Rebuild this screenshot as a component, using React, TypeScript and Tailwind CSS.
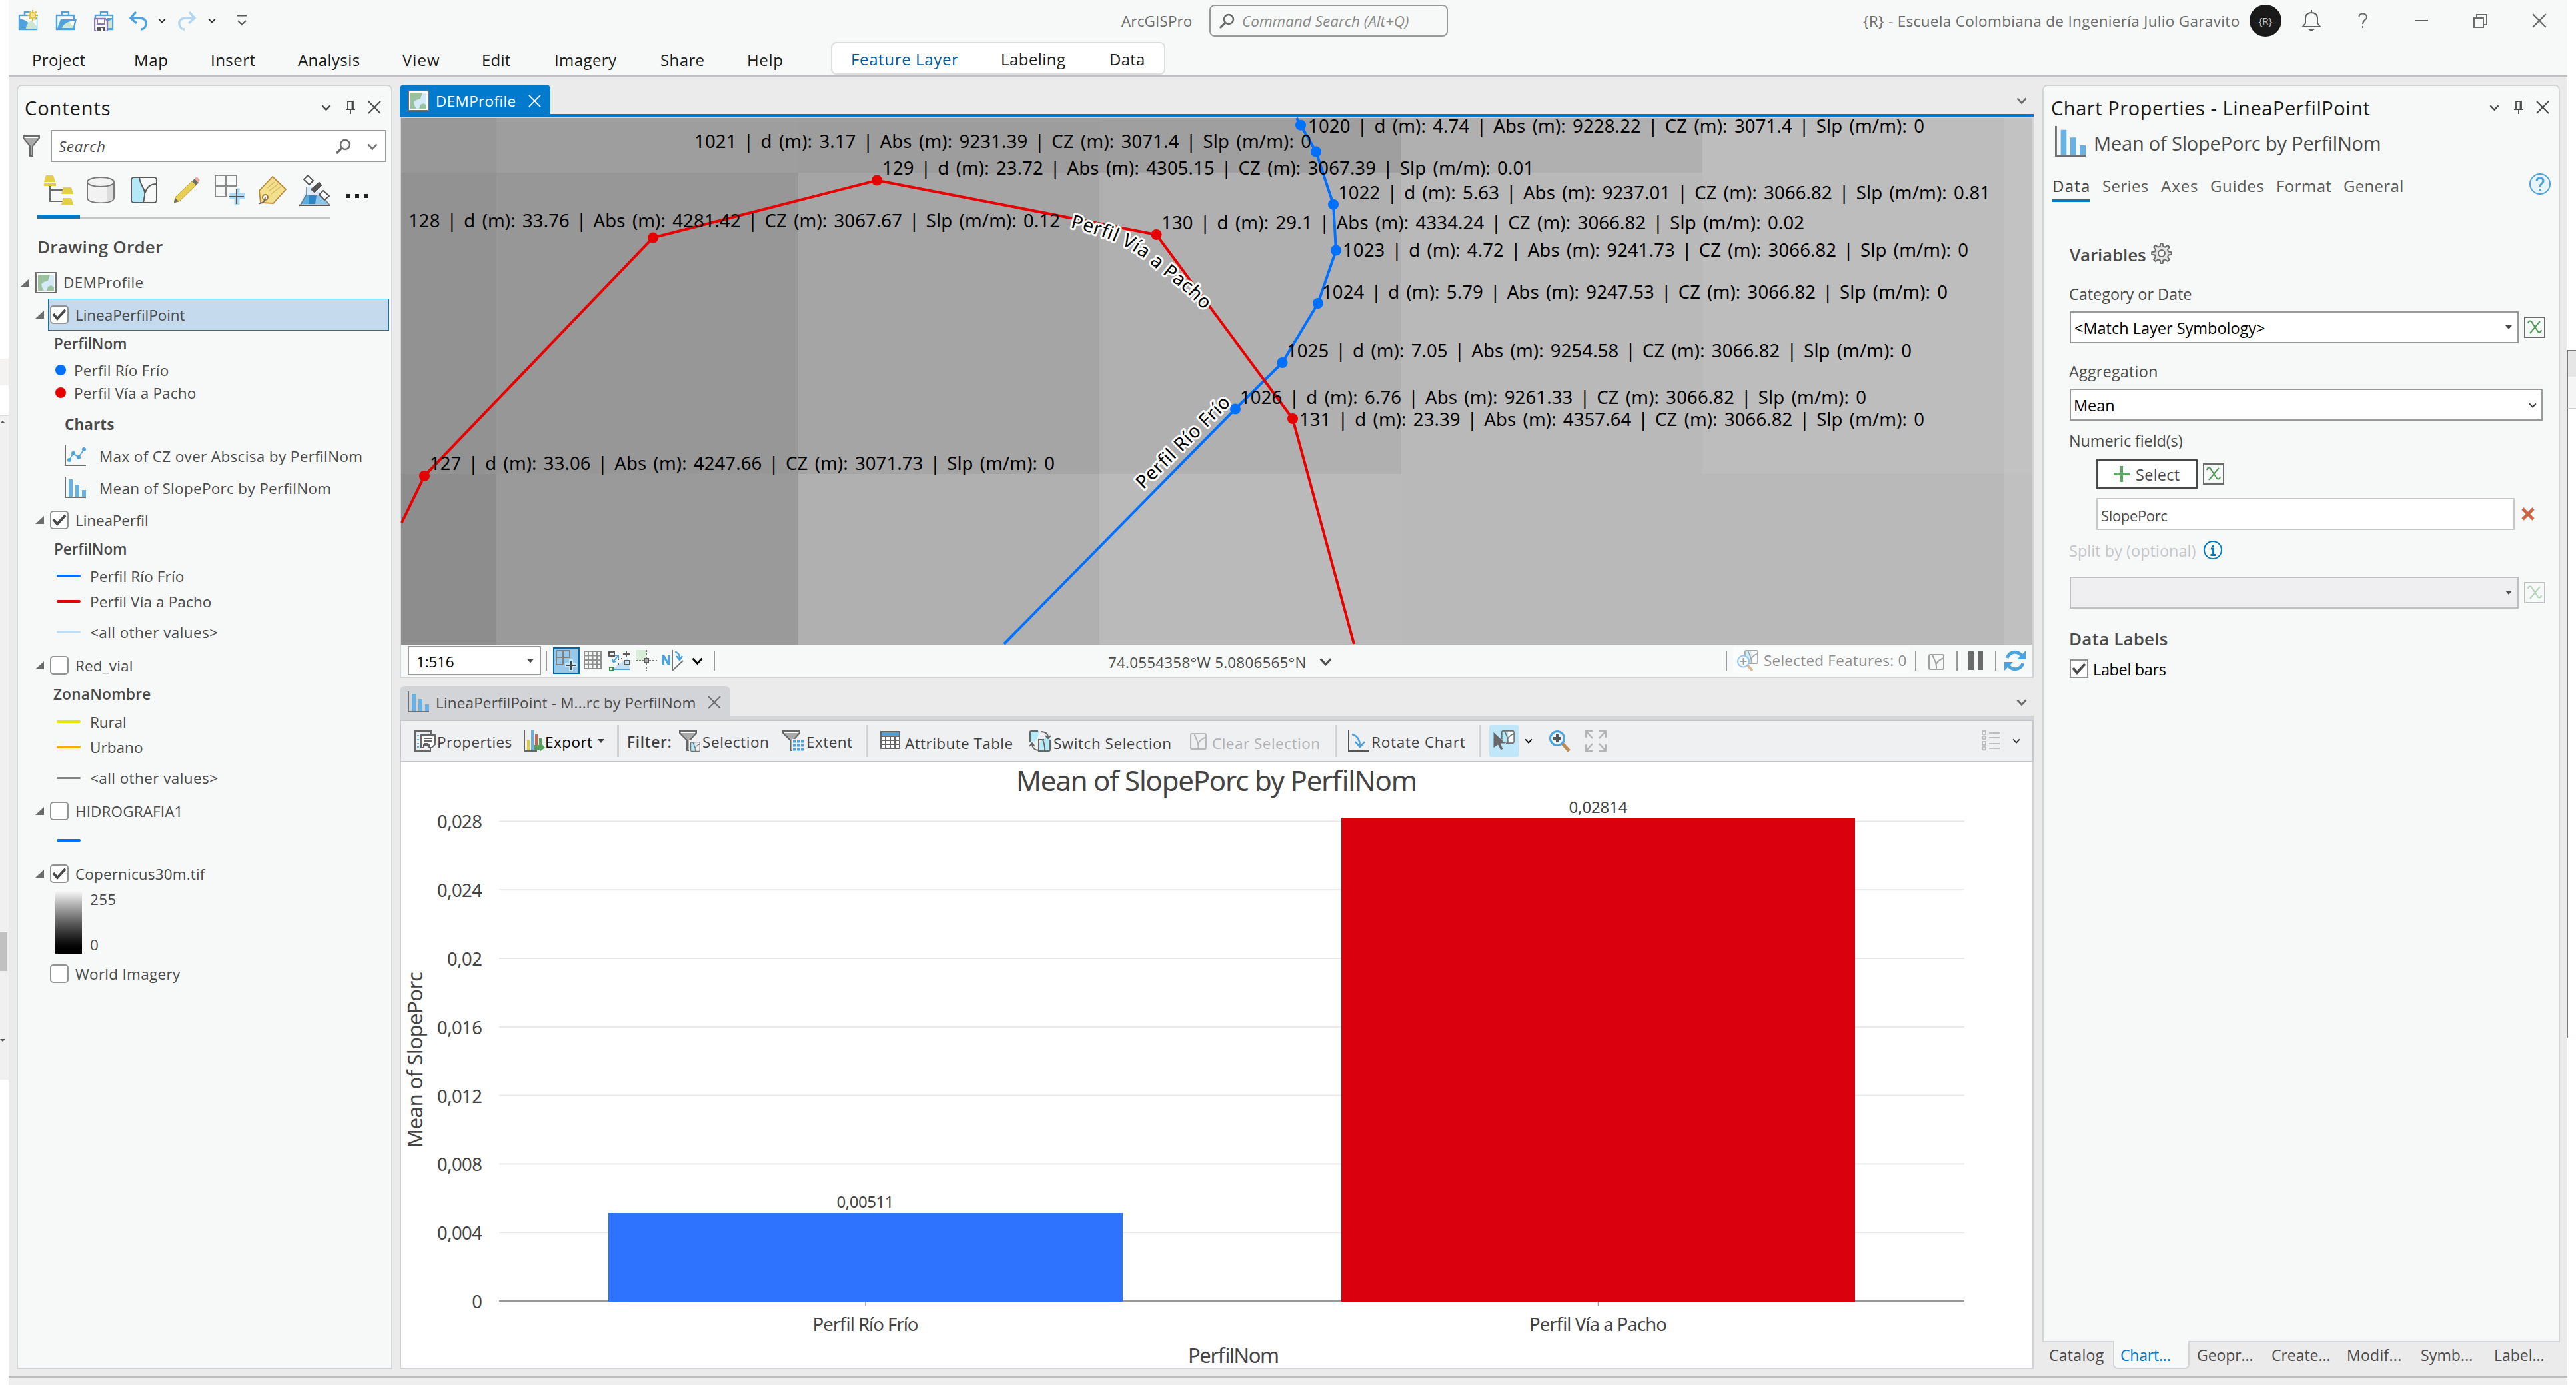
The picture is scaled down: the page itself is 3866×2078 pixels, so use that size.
import React, { useLayoutEffect, useRef } from "react";

/** Single-line text whose tracking adapts so that it fills its box exactly. */
function T({ c, children }: { c: string; children: string }) {
  const ref = useRef<HTMLSpanElement>(null);
  useLayoutEffect(() => {
    const el = ref.current;
    if (!el || !el.parentElement) return;
    el.style.letterSpacing = "0px";
    const natural = el.getBoundingClientRect().width;
    const target = el.parentElement.getBoundingClientRect().width + 2.5;
    el.style.letterSpacing = (target - natural) / children.length + "px";
  }, [children]);
  return (
    <span className={"block shrink-0 leading-none whitespace-pre " + c}>
      <span ref={ref} className="-ml-[1px] inline-block">{children}</span>
    </span>
  );
}

type P = { c?: string };

const Chevron = ({ c = "" }: P) => (
  <svg className={"shrink-0 " + c} viewBox="0 0 16 16" preserveAspectRatio="xMidYMid meet" fill="none" stroke="currentColor" strokeWidth="2.6">
    <path d="M1.5 4.5 8 11.5 14.5 4.5" />
  </svg>
);
const Cross = ({ c = "" }: P) => (
  <svg className={"shrink-0 " + c} viewBox="0 0 20 20" fill="none" stroke="currentColor" strokeWidth="2">
    <path d="M1 1 19 19M19 1 1 19" />
  </svg>
);
const Pin = ({ c = "" }: P) => (
  <svg className={"shrink-0 " + c} viewBox="0 0 14 20" fill="none" stroke="#4a4a4a" strokeWidth="1.8">
    <path d="M3 1H11V13M3 1V13M9.5 1V13M0 13.2H14M7 13V20" />
  </svg>
);
const Triangle = ({ c = "" }: P) => (
  <svg className={"shrink-0 " + c} viewBox="0 0 10 6" fill="currentColor"><path d="M0 0H10L5 6Z" /></svg>
);
const Loupe = ({ c = "" }: P) => (
  <svg className={"shrink-0 " + c} viewBox="0 0 23 23" fill="none" stroke="#6a6a6a" strokeWidth="2.6">
    <circle cx="14" cy="9" r="7" /><path d="M9 14 1 22" strokeWidth="3.2" />
  </svg>
);
const MapIcon = ({ c = "" }: P) => (
  <svg className={"shrink-0 " + c} viewBox="0 0 32 32">
    <rect x="1" y="1" width="30" height="30" fill="#fff" stroke="#6f6f6f" strokeWidth="2" />
    <rect x="4" y="4" width="24" height="24" fill="#d3e9f8" />
    <path d="M4 4H22L19 13 13 15 9 18 10 23 13 28H4ZM17 28 19 22 24 20 28 23V28Z" fill="#9bc29d" />
  </svg>
);
const BarIcon = ({ c = "" }: P) => (
  <svg className={"shrink-0 " + c} viewBox="0 0 32 32">
    <path d="M1 0V31H32" fill="none" stroke="#6f6f6f" strokeWidth="2" />
    <path d="M6 4H12V30H6ZM16 12H22V30H16ZM26 20H32V30H26Z" fill="#67b2e2" />
  </svg>
);
const LineIcon = ({ c = "" }: P) => (
  <svg className={"shrink-0 " + c} viewBox="0 0 32 32">
    <path d="M1 0V31H32" fill="none" stroke="#6f6f6f" strokeWidth="2" />
    <path d="M7 23 13 13 21 19 29 7" fill="none" stroke="#4fa3dc" strokeWidth="1.6" />
    <g fill="#4fa3dc"><circle cx="7" cy="23" r="3" /><circle cx="13" cy="13" r="3" /><circle cx="21" cy="19" r="3" /><circle cx="29" cy="7" r="3" /></g>
  </svg>
);
const XField = ({ c = "" }: P) => (
  <svg className={"h-8 w-8 shrink-0 " + c} viewBox="0 0 32 32" fill="none">
    <rect x="1" y="1" width="30" height="30" stroke="#6b6b6b" strokeWidth="2" fill="#f7f9f8" />
    <path d="M6 10C7 5 11 6 12 9L20 21C21 24 25 25 26 20M24 7 9 25" stroke="#4f9a57" strokeWidth="2" />
  </svg>
);
const Check = ({ on, c = "" }: { on?: boolean; c?: string }) => (
  <span className={"flex h-7 w-7 shrink-0 items-center justify-center rounded-[5px] border-2 border-[#939393] bg-white " + c}>
    {on && (
      <svg className="h-6 w-6" viewBox="0 0 24 24" fill="none" stroke="#4a4a4a" strokeWidth="4"><path d="M3 11 9 18 21 5" /></svg>
    )}
  </span>
);
const Expander = ({ c = "" }: P) => (
  <svg className={"h-3 w-[13px] shrink-0 " + c} viewBox="0 0 13 12"><path d="M13 0V12H0Z" fill="#6b6b6b" /></svg>
);
/* Small "selected polygon" tile reused by several tools. */
const Tile = ({ fill = "#b4e9f8", stroke = "#6f6f6f" }: { fill?: string; stroke?: string }) => (
  <g stroke={stroke} strokeWidth="2" fill="none">
    <path d="M1 1H12L13 14 8 23H1Z" fill={fill} stroke="none" />
    <rect x="1" y="1" width="22" height="22" rx="2" />
    <path d="M6 1C8 8 13 12 12 23M23 6C18 8 14 10 12 15" />
  </g>
);
const Funnel = ({ c = "" }: P) => (
  <svg className={"shrink-0 " + c} viewBox="0 0 26 32">
    <path d="M1 1H25V4L15 16V31H11V16L1 4Z" fill="#ababab" stroke="#6b6b6b" strokeWidth="2" />
    <path d="M3 2.5H23V4H3Z" fill="#fff" />
  </svg>
);
const Sep = ({ c }: { c: string }) => <span className={"shrink-0 " + c} />;

/* ---------- Title bar ---------- */

const Bag = ({ open }: { open?: boolean }) => (
  <>
    <path d="M10 8V3H20V8" fill="none" stroke="#4fa3dc" strokeWidth="2.4" />
    <rect x="2" y="8" width="26" height="21" fill={open ? "#f7f9f8" : "#fff"} stroke="#4fa3dc" strokeWidth="2.4" />
  </>
);

function TitleBar() {
  return (
    <div className="flex h-[62px] items-center text-[22.5px] text-[#6b6b6b]">
      <svg className="ml-[14px] h-8 w-8 shrink-0" viewBox="0 0 32 32">
        <Bag />
        <path d="M1 13C10 14 15 17 18 23L28 13V30H1Z" fill="#4fa3dc" />
        <path d="M12 28C12 20 20 14 28 13V28Z" fill="#cfe6d2" /><path d="M21 16 28 24V15Z" fill="#fff" />
        <circle cx="22" cy="8" r="6.5" fill="#fdf3c0" /><circle cx="22" cy="8" r="4.3" fill="#f7e58e" stroke="#d9b62e" strokeWidth="1.6" />
        <path d="M22 0V3M22 13V16M14 8H17M27 8H30M16.500 2.500 18.500 4.500M27.500 2.500 25.500 4.500M16.500 13.500 18.500 11.500M27.500 13.500 25.500 11.500" stroke="#d9b62e" strokeWidth="1.800" />
      </svg>
      <svg className="ml-[24px] h-8 w-8 shrink-0" viewBox="0 0 32 32">
        <Bag open />
        <path d="M8 14H32L28 30H2Z" fill="#4fa3dc" /><path d="M10 27C12 21 18 17 29 16L26 27Z" fill="#cfe6d2" /><path d="M21 18 27 25 29 16Z" fill="#fff" />
      </svg>
      <svg className="ml-[26px] h-8 w-8 shrink-0" viewBox="0 0 32 32">
        <Bag />
        <path d="M20 12H29V30H18Z" fill="#4fa3dc" /><path d="M21 27V17L27 14V27Z" fill="#cfe6d2" />
        <path d="M1 13H17L20 16V32H3L1 30Z" fill="#fff" stroke="#8a78b8" strokeWidth="2.4" />
        <path d="M5 14V21H16V14" fill="none" stroke="#8a78b8" strokeWidth="2" /><path d="M5 25H16V32H5Z" fill="#555" /><path d="M11 27H13V32H11Z" fill="#fff" />
      </svg>
      <svg className="ml-[19px] h-8 w-8 shrink-0" viewBox="0 0 32 32" fill="none" stroke="#4fa3dc" strokeWidth="3.4">
        <path d="M12 3 4 12 13 20M4 12H17C25 12 28 17 27 22 26 27 22 29 19 29" />
      </svg>
      <Chevron c="ml-[13px] h-3 w-3 text-[#333]" />
      <svg className="ml-[15px] h-8 w-8 shrink-0" viewBox="0 0 32 32" fill="none" stroke="#b4d6ee" strokeWidth="3.4">
        <path d="M20 3 28 12 19 20M28 12H15C7 12 4 17 5 22 6 27 10 29 13 29" />
      </svg>
      <Chevron c="ml-[16px] h-3 w-3 text-[#333]" />
      <svg className="ml-[32px] h-[18px] w-[14px] shrink-0" viewBox="0 0 14 18" fill="none" stroke="#5a5a5a" strokeWidth="2"><path d="M0 1.500H14M1 9 7 15 13 9" /></svg>
      <T c="mt-[3px] ml-[1314px] w-[104px]">ArcGISPro</T>
      <div className="ml-[27px] flex h-12 w-[358px] shrink-0 items-center rounded-[8px] border-2 border-[#999]">
        <Loupe c="ml-[13px] h-[23px] w-[23px]" />
        <T c="mt-[3px] ml-[12px] w-[248px] text-[#8a8a8a] italic">Command Search (Alt+Q)</T>
      </div>
      <T c="mt-[3px] ml-[624px] w-[563px]">{"{R} - Escuela Colombiana de Ingeniería Julio Garavito"}</T>
      <div className="ml-[16px] flex h-12 w-12 shrink-0 items-center justify-center rounded-full bg-[#1a1a1a] text-[15px] text-[#c5c5c5]">{"{R}"}</div>
      <svg className="ml-[29px] h-8 w-8 shrink-0" viewBox="0 0 32 32" fill="none" stroke="#5f5f5f" strokeWidth="2">
        <path d="M3 25H29L25 20V12C25 7 21 4 16 4S7 7 7 12V20ZM16 0V4" /><path d="M13 29H19L16 31Z" fill="#5f5f5f" />
      </svg>
      <svg className="ml-[51px] h-6 w-5 shrink-0" viewBox="0 0 20 24" fill="none" stroke="#6b6b6b" strokeWidth="2"><path d="M4.500 7C4 3 7 1.500 10 1.500S16 3 16 7C16 11 10 11 10 17M10 20V23" /></svg>
      <Sep c="ml-[68px] h-[2px] w-[20px] bg-[#5f5f5f]" />
      <svg className="ml-[68px] h-[21px] w-[21px] shrink-0" viewBox="0 0 21 21" fill="none" stroke="#6b6b6b" strokeWidth="2"><path d="M1 6H15V20H1ZM5 6V1H20V16H15" /></svg>
      <Cross c="ml-[67px] h-[22px] w-[22px]" />
    </div>
  );
}

function Ribbon() {
  return (
    <div className="flex h-[53px] items-center border-b-2 border-[#bfc1c5] pt-[4px] text-[24px] text-[#1a1a1a]">
      <T c="ml-[36px] w-[78px]">Project</T>
      <T c="ml-[75px] w-[49px]">Map</T>
      <T c="ml-[66px] w-[65px]">Insert</T>
      <T c="ml-[66px] w-[91px]">Analysis</T>
      <T c="ml-[66px] w-[54px]">View</T>
      <T c="ml-[65px] w-[41px]">Edit</T>
      <T c="ml-[68px] w-[91px]">Imagery</T>
      <T c="ml-[68px] w-[64px]">Share</T>
      <T c="ml-[66px] w-[52px]">Help</T>
      <div className="-mt-[3px] ml-[73px] flex h-[49px] w-[502px] shrink-0 items-center self-start rounded-[8px] border-2 border-[#dcdedd] bg-white pt-[2px]">
        <T c="ml-[29px] w-[159px] text-[#00599e]">Feature Layer</T>
        <T c="ml-[66px] w-[95px]">Labeling</T>
        <T c="ml-[68px] w-[51px]">Data</T>
      </div>
    </div>
  );
}

/* ---------- Contents pane ---------- */

function ContentsTools() {
  return (
    <div className="mt-[18px] flex h-12 items-center">
      <svg className="ml-[39px] h-[46px] w-[44px] shrink-0" viewBox="0 0 44 46">
        <path d="M9 17V40H28M9 23H28" fill="none" stroke="#6b6b6b" strokeWidth="2" />
        <path d="M3 1H14L17 11H0ZM0 13H18V17H0ZM29 19H41L44 29H26ZM29 35H41L44 45H26Z" fill="#e3cf4a" />
      </svg>
      <svg className="ml-[20px] h-[40px] w-[42px] shrink-0" viewBox="0 0 42 40" fill="#f2f2f2" stroke="#7a7a7a" strokeWidth="2">
        <path d="M1 8V32C1 42 41 42 41 32V8" /><path d="M30 15V38C36 37 40 35 40 32V9Z" fill="#dcdcdc" stroke="none" /><ellipse cx="21" cy="8" rx="20" ry="7" />
      </svg>
      <svg className="ml-[24px] h-[40px] w-[40px] shrink-0" viewBox="0 0 40 40" fill="none" stroke="#5a5a5a" strokeWidth="2">
        <path d="M2 2H14L17 12 21 20 18 38H2Z" fill="#b4e9f8" stroke="none" />
        <rect x="1" y="1" width="38" height="38" rx="4" /><path d="M13 1C14 14 23 18 21 28L19 39M39 11C30 11 24 16 22 24" />
      </svg>
      <svg className="ml-[25px] h-[40px] w-[39px] shrink-0" viewBox="0 0 39 40">
        <path d="M2 31 28 6 34 12 8 37 0 39Z" fill="#e6cf52" stroke="#b59a2c" strokeWidth="1" /><path d="M27 7 31 3 37 9 33 13Z" fill="#6b6b6b" /><path d="M31 3 34 0 39 5 36 9Z" fill="#eba59b" /><path d="M0 39 2 32 7 37Z" fill="#666" />
      </svg>
      <svg className="ml-[22px] h-[46px] w-[46px] shrink-0" viewBox="0 0 46 46" fill="none" stroke="#8a8a8a" strokeWidth="2">
        <path d="M1 1H33V17M17 1V33M1 17H33M1 1V33H17" /><path d="M28 29H34V22H36V29H45V35H36V44H31V35H24V29Z" fill="#a9d9f5" stroke="#a9d9f5" strokeWidth="3" />
        <path d="M33 22V44M22 33H44" stroke="#555" />
      </svg>
      <svg className="ml-[19px] h-[43px] w-[43px] shrink-0" viewBox="0 0 43 43">
        <path d="M22 1 42 20 23 41 4 40 2 22Z" fill="#f3e08d" stroke="#b9883f" strokeWidth="1.8" /><path d="M14 18 25 9M16 23 30 12M20 27 34 16" stroke="#d8b768" strokeWidth="1.500" />
        <circle cx="11" cy="32" r="4" fill="#fff" stroke="#a0742f" strokeWidth="2" /><path d="M11 31C11 37 8 42 1 41" fill="none" stroke="#6b6b6b" strokeWidth="2" />
      </svg>
      <svg className="ml-[19px] h-[47px] w-[47px] shrink-0" viewBox="0 0 47 47">
        <path d="M12 18H24L46 45H1Z" fill="#d5ebf8" /><path d="M3 44 9 31H24V44Z" fill="#5aade0" /><path d="M24 31H34L44 44H22Z" fill="#8cc5ea" /><path d="M14 31H26L24 44H14Z" fill="#2d86c4" /><path d="M0 46H47" stroke="#555" strokeWidth="2.500" />
        <path d="M11 18V30L2 45M38 36 46 46" fill="none" stroke="#777" strokeWidth="1.500" />
        <path d="M13 1 21 9 15 15 7 7Z" fill="#fff" stroke="#555" strokeWidth="2" /><path d="M30 10 35 16 23 28 16 22Z" fill="#555" stroke="#f7f9f8" strokeWidth="1" /><path d="M36 24 45 32 38 38 30 30Z" fill="#fff" stroke="#555" strokeWidth="2" />
      </svg>
      <div className="mt-[18px] ml-[24px] flex gap-[7px]">
        <Sep c="h-[6px] w-[6px] bg-[#222]" /><Sep c="h-[6px] w-[6px] bg-[#222]" /><Sep c="h-[6px] w-[6px] bg-[#222]" />
      </div>
    </div>
  );
}

const Layer = ({ mt, w, on, noArrow, children }: { mt: string; w: string; on?: boolean; noArrow?: boolean; children: string }) => (
  <div className={"flex h-8 items-center " + mt}>
    {noArrow ? <span className="ml-[26px] w-[13px]" /> : <Expander c="ml-[26px]" />}
    <Check on={on} c="ml-[9px]" />
    <T c={"mt-[2px] ml-[11px] " + w}>{children}</T>
  </div>
);
const Heading = ({ mt, w, indent = "ml-[55px]", children }: { mt: string; w: string; indent?: string; children: string }) => (
  <div className={"flex h-8 items-center font-semibold " + mt}><T c={indent + " " + w}>{children}</T></div>
);
const LineSym = ({ mt, color, w, children }: { mt: string; color: string; w?: string; children?: string }) => (
  <div className={"flex h-8 items-center " + mt}>
    <span className={"ml-[58px] w-[36px] shrink-0 rounded-full " + color} />
    {children && <T c={"mt-[3px] ml-[15px] " + w}>{children}</T>}
  </div>
);
const PointSym = ({ mt, color, w, children }: { mt: string; color: string; w: string; children: string }) => (
  <div className={"flex h-8 items-center " + mt}>
    <span className={"ml-[56px] h-4 w-4 shrink-0 rounded-full " + color} />
    <T c={"mt-[2px] ml-[13px] " + w}>{children}</T>
  </div>
);

function Contents() {
  return (
    <div className="ml-[12px] h-[1927px] w-[564px] shrink-0 rounded-t-[8px] border-2 border-[#d3d4d8] bg-[#f7f9f8] text-[22.5px] text-[#4a4a4a]">
      <div className="flex h-16 items-center text-[#4a4a4a]">
        <T c="mt-[1px] ml-[11px] w-[127px] text-[29px] text-[#1a1a1a]">Contents</T>
        <Chevron c="ml-[317px] h-[15px] w-[15px]" />
        <Pin c="ml-[22px] h-5 w-[14px]" />
        <Cross c="ml-[19px] h-5 w-5" />
      </div>
      <div className="mt-[2px] flex h-12 items-center">
        <Funnel c="ml-[7px] h-8 w-[26px]" />
        <div className="ml-[16px] flex h-12 w-[504px] shrink-0 items-center border-2 border-[#999] bg-white">
          <T c="mt-[3px] ml-[11px] w-[68px] italic">Search</T>
          <Loupe c="ml-[347px] h-[23px] w-[23px]" />
          <Chevron c="mt-[2px] ml-[24px] h-4 w-4 text-[#777]" />
        </div>
      </div>
      <ContentsTools />
      <div className="mt-[13px] ml-[29px] flex h-[6px] items-end">
        <Sep c="h-[6px] w-[64px] bg-[#007ac2]" /><Sep c="h-[2px] w-[376px] bg-[#c4c6c8]" />
      </div>
      <div className="mt-[26px] flex h-8 items-center text-[26px] font-semibold"><T c="ml-[30px] w-[186px]">Drawing Order</T></div>
      <div className="mt-[22px] flex h-8 items-center">
        <Expander c="ml-[4px]" /><MapIcon c="ml-[9px] h-8 w-8" /><T c="mt-[1px] ml-[11px] w-[118px]">DEMProfile</T>
      </div>
      <div className="mt-[8px] -mb-[8px] flex h-12 items-center">
        <Expander c="ml-[26px]" />
        <div className="ml-[6px] flex h-12 w-[512px] items-center border border-[#0079c1] bg-[#c5dbed]">
          <Check on c="ml-[2px]" /><T c="mt-[2px] ml-[11px] w-[162px]">LineaPerfilPoint</T>
        </div>
      </div>
      <Heading mt="mt-[12px]" w="w-[107px]">PerfilNom</Heading>
      <PointSym mt="mt-[7px]" color="bg-[#0070ff]" w="w-[140px]">Perfil Río Frío</PointSym>
      <PointSym mt="mt-[2px]" color="bg-[#e60000]" w="w-[181px]">Perfil Vía a Pacho</PointSym>
      <div className="mt-[16px] flex h-8 items-center font-bold"><T c="ml-[71px] w-[72px]">Charts</T></div>
      <div className="mt-[14px] flex h-8 items-center"><LineIcon c="ml-[70px] h-8 w-8" /><T c="mt-[4px] ml-[21px] w-[393px]">Max of CZ over Abscisa by PerfilNom</T></div>
      <div className="mt-[16px] flex h-8 items-center"><BarIcon c="ml-[70px] h-8 w-8" /><T c="mt-[4px] ml-[21px] w-[346px]">Mean of SlopePorc by PerfilNom</T></div>
      <Layer mt="mt-[17px]" w="w-[107px]" on>LineaPerfil</Layer>
      <Heading mt="mt-[12px]" w="w-[107px]">PerfilNom</Heading>
      <LineSym mt="mt-[8px]" color="h-[4px] bg-[#0070ff]" w="w-[139px]">Perfil Río Frío</LineSym>
      <LineSym mt="mt-[6px]" color="h-[4px] bg-[#e60000]" w="w-[180px]">Perfil Vía a Pacho</LineSym>
      <LineSym mt="mt-[14px]" color="h-[4px] bg-[#c0dbf4]" w="w-[190px]">{"<all other values>"}</LineSym>
      <Layer mt="mt-[18px]" w="w-[84px]">Red_vial</Layer>
      <Heading mt="mt-[12px]" w="w-[144px]" indent="ml-[54px]">ZonaNombre</Heading>
      <LineSym mt="mt-[9px]" color="h-[4px] bg-[#e6e600]" w="w-[52px]">Rural</LineSym>
      <LineSym mt="mt-[6px]" color="h-[4px] bg-[#ffaa00]" w="w-[77px]">Urbano</LineSym>
      <LineSym mt="mt-[14px]" color="h-[3px] bg-[#828282]" w="w-[190px]">{"<all other values>"}</LineSym>
      <Layer mt="mt-[18px]" w="w-[159px]">HIDROGRAFIA1</Layer>
      <LineSym mt="mt-[12px]" color="h-[4px] bg-[#0070ff]" />
      <Layer mt="mt-[18px]" w="w-[192px]" on>Copernicus30m.tif</Layer>
      <div className="mt-[8px] flex h-24">
        <span className="ml-[56px] w-[40px] shrink-0 bg-gradient-to-b from-white to-black" />
        <div className="flex flex-col justify-between py-[4px]"><T c="ml-[13px] w-[37px]">255</T><T c="mb-[-2px] ml-[13px] w-[12px]">0</T></div>
      </div>
      <Layer mt="mt-[14px]" w="w-[155px]" noArrow>World Imagery</Layer>
    </div>
  );
}

/* ---------- Map view ---------- */

const COLS = [602, 745, 1198, 1650, 2103, 2555, 3008, 3050];
const ROWS = [177, 259, 711, 967];
const SHADES = [
  ["#989898", "#9e9e9e", "#9d9d9d", "#9f9f9f", "#b0b0b0", "#bdbdbd", "#c2c2c2"],
  ["#929292", "#979797", "#a5a5a5", "#b0b0b0", "#b9b9b9", "#bdbdbd", "#c2c2c2"],
  ["#8d8d8d", "#9a9a9a", "#b0b0b0", "#bababa", "#b9b9b9", "#b9b9b9", "#c0c0c0"],
];
const RED = [[637, 714], [980, 356.600], [1316, 270.500], [1735.600, 352], [1940, 628]];
const BLUE = [[1952, 187.700], [1975, 227.600], [2001, 306.700], [2005, 375.500], [1978, 455], [1924.500, 544], [1854, 613.500]];
const LABELS: [number, number, number, string][] = [
  [1965, 2887, 190, "1020 | d (m): 4.74 | Abs (m): 9228.22 | CZ (m): 3071.4 | Slp (m/m): 0"],
  [1044, 1967, 213, "1021 | d (m): 3.17 | Abs (m): 9231.39 | CZ (m): 3071.4 | Slp (m/m): 0"],
  [1326, 2301, 253, "129 | d (m): 23.72 | Abs (m): 4305.15 | CZ (m): 3067.39 | Slp (m/m): 0.01"],
  [2010, 2986, 289.5, "1022 | d (m): 5.63 | Abs (m): 9237.01 | CZ (m): 3066.82 | Slp (m/m): 0.81"],
  [615, 1590, 332, "128 | d (m): 33.76 | Abs (m): 4281.42 | CZ (m): 3067.67 | Slp (m/m): 0.12"],
  [1745, 2707, 335, "130 | d (m): 29.1 | Abs (m): 4334.24 | CZ (m): 3066.82 | Slp (m/m): 0.02"],
  [2017, 2953, 376, "1023 | d (m): 4.72 | Abs (m): 9241.73 | CZ (m): 3066.82 | Slp (m/m): 0"],
  [1986, 2922, 438.5, "1024 | d (m): 5.79 | Abs (m): 9247.53 | CZ (m): 3066.82 | Slp (m/m): 0"],
  [1933, 2868, 527, "1025 | d (m): 7.05 | Abs (m): 9254.58 | CZ (m): 3066.82 | Slp (m/m): 0"],
  [1863, 2800, 597, "1026 | d (m): 6.76 | Abs (m): 9261.33 | CZ (m): 3066.82 | Slp (m/m): 0"],
  [1952, 2887, 630, "131 | d (m): 23.39 | Abs (m): 4357.64 | CZ (m): 3066.82 | Slp (m/m): 0"],
  [647, 1582, 696, "127 | d (m): 33.06 | Abs (m): 4247.66 | CZ (m): 3071.73 | Slp (m/m): 0"],
];

function MapCanvas() {
  return (
    <svg className="block h-[790px] w-[2448px] overflow-visible font-['Noto_Sans',sans-serif]" viewBox="602 177 2448 790">
      {SHADES.map((row, r) =>
        row.map((f, i) => (
          <rect key={r + "-" + i} x={COLS[i]} y={ROWS[r]} width={COLS[i + 1] - COLS[i]} height={ROWS[r + 1] - ROWS[r]} fill={f} shapeRendering="crispEdges" />
        )),
      )}
      <polyline points={"1946,177 " + BLUE.join(" ") + " 1507,966"} fill="none" stroke="#0070ff" strokeWidth="4" />
      <polyline points={"603,784 " + RED.join(" ") + " 2032,966"} fill="none" stroke="#e60000" strokeWidth="4" />
      {RED.map(([x, y]) => <circle key={x} cx={x} cy={y} r="8" fill="#e60000" />)}
      {BLUE.map(([x, y]) => <circle key={x} cx={x} cy={y} r="8" fill="#0070ff" />)}
      <path id="via" d="M1606 341 C1664 355 1697 370 1731 399 S1780 434 1816 476" fill="none" />
      <g fontSize="28" fill="#000" stroke="#fff" strokeWidth="6" strokeLinejoin="round" paintOrder="stroke">
        <text textLength="240"><textPath href="#via" textLength="240">Perfil Vía a Pacho</textPath></text>
        <text transform="translate(1716 735) rotate(-44.500)" textLength="185">Perfil Río Frío</text>
      </g>
      {LABELS.map(([x1, x2, y, s]) => (
        <text key={s} className="[word-spacing:3px]" x={x1 - 2} y={y + 9.200} fontSize="27.500" fill="#000" textLength={x2 - x1 + 3}>{s}</text>
      ))}
    </svg>
  );
}

function StatusBar() {
  return (
    <div className="flex h-[50px] items-center border-b-2 border-[#d3d4d8] bg-[#f7f9f8] text-[22.5px] text-[#4a4a4a]">
      <div className="ml-[10px] flex h-11 w-[200px] shrink-0 items-center border-2 border-[#999] bg-white">
        <T c="mt-[4px] ml-[12px] w-[54px] text-black">1:516</T>
        <Triangle c="ml-[111px] h-[7px] w-[10px]" />
      </div>
      <Sep c="ml-[7px] h-[30px] w-[2px] bg-[#999]" />
      <div className="ml-[9px] flex h-10 w-10 shrink-0 items-center justify-center border-2 border-[#0067a6] bg-[#97c8ea]">
        <svg className="h-8 w-8" viewBox="0 0 32 32" fill="none" stroke="#808080" strokeWidth="2">
          <path d="M1 1H21V12M11 1V22M1 11H21M1 1V22H11" /><path d="M23 14V32M14 23H32" stroke="#c5e8fb" strokeWidth="6" /><path d="M23 16V30M16 23H30" stroke="#444" />
        </svg>
      </div>
      <svg className="ml-[4px] h-8 w-8 shrink-0" viewBox="0 0 32 32" fill="none" stroke="#8f8f8f" strokeWidth="2"><path d="M3 2H28V28H3ZM3 8.500H28M3 15H28M3 21.500H28M9 2V28M15.500 2V28M22 2V28" /></svg>
      <svg className="ml-[7px] h-8 w-[33px] shrink-0" viewBox="0 0 33 32" fill="none" stroke="#5a5a5a" strokeWidth="2">
        <path d="M6 29 30 11 32 29Z" fill="#bfe0f5" stroke="none" /><path d="M1 3H9V9H1ZM24 16H32V22H24ZM27 2V11M22 6H32" /><path d="M7 18 15 8M7 18 6 13M7 18 12 17M15 8 10 8M15 8 15 13M6 29H32" stroke="#4fa3dc" /><path d="M15 13V17M15 20V24M20 12V15" strokeDasharray="2 2" /><rect x="2" y="26" width="5" height="5" stroke="#3f8a4c" />
      </svg>
      <svg className="ml-[8px] h-8 w-8 shrink-0" viewBox="0 0 32 32"><path d="M0 0H15V15H0Z" fill="#d8edd7" /><path d="M16 0V12M16 20V32M0 16H12M20 16H32" stroke="#777" strokeWidth="2" strokeDasharray="3 2" /><rect x="13" y="13" width="6" height="6" fill="#aaa" stroke="#555" strokeWidth="2" /></svg>
      <svg className="ml-[7px] h-8 w-[33px] shrink-0" viewBox="0 0 33 32" fill="none"><path d="M2 22V9H3L10 21H11V8" stroke="#4fa3dc" strokeWidth="3.400" /><path d="M16 0V31L32 16" stroke="#777" strokeWidth="2" /><path d="M20 3C26 4 27 8 27 13M22 9 27 15 31 9" stroke="#4fa3dc" strokeWidth="2.400" /></svg>
      <Chevron c="ml-[12px] h-[17px] w-[17px] text-black" />
      <Sep c="ml-[16px] h-[30px] w-[2px] bg-[#999]" />
      <T c="mt-[6px] ml-[591px] w-[295px]">74.0554358°W 5.0806565°N</T>
      <Chevron c="mt-[3px] ml-[21px] h-[19px] w-[19px]" />
      <Sep c="ml-[591px] h-[30px] w-[2px] bg-[#999]" />
      <div className="ml-[9px] flex h-10 w-[264px] shrink-0 items-center bg-[#fafbfb]">
        <svg className="ml-[6px] h-8 w-8 shrink-0 opacity-60" viewBox="0 0 32 32" fill="none">
          <g transform="translate(11 0) scale(.87)"><Tile /></g>
          <circle cx="9.500" cy="17" r="8.500" fill="#f0f9fe" stroke="#4fa3dc" strokeWidth="2" /><path d="M9.500 12V22M4.500 17H14.500" stroke="#666" strokeWidth="2" /><path d="M16 23 23 31" stroke="#c98b4e" strokeWidth="3.500" />
        </svg>
        <T c="mt-[1px] ml-[9px] w-[212px] text-[#8e8e8e]">Selected Features: 0</T>
      </div>
      <Sep c="ml-[9px] h-[30px] w-[2px] bg-[#999]" />
      <svg className="mt-[4px] ml-[18px] h-6 w-6 shrink-0" viewBox="0 0 24 24"><Tile fill="none" stroke="#a0a0a0" /></svg>
      <Sep c="ml-[18px] h-[30px] w-[2px] bg-[#999]" />
      <div className="ml-[16px] flex w-[22px] shrink-0 justify-between"><Sep c="h-7 w-2 bg-[#6b6b6b]" /><Sep c="h-7 w-2 bg-[#6b6b6b]" /></div>
      <Sep c="ml-[18px] h-[30px] w-[2px] bg-[#999]" />
      <svg className="ml-[12px] h-8 w-8 shrink-0" viewBox="0 0 32 32" fill="none" stroke="#4fa3dc" strokeWidth="5">
        <path d="M4 12C8 1 21 1 26 9M28 20C24 31 11 31 6 23" /><path d="M32 1V14H19ZM0 31V18H13Z" fill="#4fa3dc" stroke="none" />
      </svg>
    </div>
  );
}

/* ---------- Chart view ---------- */

function ChartToolbar() {
  const tool = "h-8 w-8 shrink-0";
  return (
    <div className="flex h-16 items-center border-2 border-[#c8c8ca] bg-[#eff0f2] text-[22.500px] text-[#3f3f3f]">
      <svg className={tool + " ml-[20px]"} viewBox="0 0 32 32" fill="none" stroke="#666" strokeWidth="2">
        <path d="M25 6V1H1V31H24V27" /><path d="M4 8H8M4 14H8M4 20H8M4 25H8" stroke="#67b2e2" strokeDasharray="3 1" /><path d="M10 7H31V21L26 26H22V22H14V26H10Z" fill="#fff" /><path d="M14 12H27M14 16H27M14 20H20" />
      </svg>
      <T c="mt-[5px] ml-[3px] w-[110px]">Properties</T>
      <svg className={tool + " ml-[19px]"} viewBox="0 0 32 32"><path d="M1 0V31H20" fill="none" stroke="#666" strokeWidth="2" /><path d="M5 14H9V30H5Z" fill="#e0cb45" /><path d="M11 0H15V30H11Z" fill="#67b2e2" /><path d="M17 6H21V22H17Z" fill="#c8684a" /><path d="M23 12H27V22H23ZM16 22H24V17L32 26 24 32V29H16Z" fill="#55a05b" /></svg>
      <T c="mt-[5px] ml-[1px] w-[69px] text-black">Export</T>
      <Triangle c="ml-[9px] h-[6px] w-[10px]" />
      <Sep c="ml-[19px] h-12 w-[3px] bg-[#d0d1d4]" />
      <T c="mt-[5px] ml-[13px] w-[65px] font-semibold">Filter:</T>
      <svg className={tool + " ml-[12px]"} viewBox="0 0 32 32"><path d="M1 1H26V4L16 15V30H12V15L1 4Z" fill="#ababab" stroke="#666" strokeWidth="2" /><path d="M3 2.500H24V4H3Z" fill="#fff" /><rect x="15" y="15" width="17" height="17" fill="#eff0f2" /><g transform="translate(17 17) scale(.62)"><Tile /></g></svg>
      <T c="mt-[5px] ml-[4px] w-[98px]">Selection</T>
      <svg className={tool + " ml-[21px]"} viewBox="0 0 32 32"><path d="M1 1H26V4L16 15V30H12V15L1 4Z" fill="#ababab" stroke="#666" strokeWidth="2" /><path d="M3 2.500H24V4H3Z" fill="#fff" /><path d="M15 13H32V31H15Z" fill="#eff0f2" /><path d="M16 16.500H32M16 22.500H32M16 28.500H32" stroke="#4fa3dc" strokeWidth="4" strokeDasharray="4 2" /></svg>
      <T c="mt-[5px] ml-[5px] w-[67px]">Extent</T>
      <Sep c="ml-[21px] h-12 w-[3px] bg-[#d0d1d4]" />
      <svg className={tool + " ml-[19px]"} viewBox="0 0 32 32" fill="none" stroke="#666" strokeWidth="2"><path d="M1 2H29V27H1Z" fill="#fff" /><path d="M2 3H28V8H2Z" fill="#4fa3dc" stroke="none" /><path d="M1 9H29M1 15H29M1 21H29M8 9V27M15 9V27M22 9V27" /></svg>
      <T c="mt-[8px] ml-[6px] w-[160px]">Attribute Table</T>
      <svg className={tool + " ml-[26px]"} viewBox="0 0 32 32" fill="none" stroke="#666" strokeWidth="2"><path d="M1 15V1H15L12 12 7 18Z" fill="#b4e9f8" stroke="none" /><path d="M20 12H31V31H17L12 24Z" fill="#b4e9f8" stroke="none" /><path d="M1 18V2Q1 1 3 1H13M31 14V29Q31 31 29 31H14V14H22" /><path d="M17 2C24 2 28 5 28 11M24 8 28 12 32 8M15 30C8 30 4 26 4 20M0 24 4 19 8 24M20 14C22 20 24 24 23 31" /></svg>
      <T c="mt-[8px] ml-[5px] w-[175px]">Switch Selection</T>
      <svg className="ml-[29px] h-[25px] w-[25px] shrink-0" viewBox="0 0 24 24"><Tile fill="none" stroke="#b8b8ba" /></svg>
      <T c="mt-[8px] ml-[9px] w-[160px] text-[#b0b0b2]">Clear Selection</T>
      <Sep c="ml-[23px] h-12 w-[3px] bg-[#d0d1d4]" />
      <svg className={tool + " ml-[17px]"} viewBox="0 0 32 32" fill="none"><path d="M1 0V31H32" stroke="#555" strokeWidth="2" /><path d="M6 6C14 8 18 14 18 24M11 17 18 25 25 17" stroke="#4fa3dc" strokeWidth="2.600" /></svg>
      <T c="mt-[5px] ml-[4px] w-[139px]">Rotate Chart</T>
      <Sep c="ml-[21px] h-12 w-[3px] bg-[#d0d1d4]" />
      <div className="ml-[13px] flex h-12 w-[44px] shrink-0 items-center justify-center rounded-[3px] bg-[#c0e6fa]">
        <svg className="h-8 w-8" viewBox="0 0 32 32"><g transform="translate(12 0) scale(.83)"><rect width="24" height="24" fill="#fff" /><Tile /></g><path d="M0 2 19 20H11L15 28 11 30 7 22 0 27Z" fill="#666" stroke="#c0e6fa" strokeWidth="1" /></svg>
      </div>
      <Chevron c="ml-[9px] h-3 w-3 text-black" />
      <svg className={tool + " ml-[25px]"} viewBox="0 0 32 32" fill="none"><circle cx="12" cy="12" r="10.500" fill="#e4f3fc" stroke="#4fa3dc" strokeWidth="3" /><path d="M12 6V18M6 12H18" stroke="#555" strokeWidth="4" /><path d="M20 20 30 31" stroke="#bd8a55" strokeWidth="5" /></svg>
      <svg className={tool + " ml-[22px]"} viewBox="0 0 32 32" fill="none" stroke="#b5b5b7" strokeWidth="2.600"><path d="M1 11V1H11M21 1H31V11M31 21V31H21M11 31H1V21M2 2 11 12M30 2 21 12M30 30 21 20M2 30 11 20" /></svg>
      <svg className="ml-[563px] h-8 w-[27px] shrink-0" viewBox="0 0 27 32" fill="none" stroke="#bdbdc0" strokeWidth="2"><path d="M1 1H6V6H1ZM1 17H6V22H1ZM11 4H27M11 11H27M11 20H27M11 27H27" /><circle cx="3.500" cy="11" r="2.500" /><circle cx="3.500" cy="27" r="2.500" /></svg>
      <Chevron c="ml-[19px] h-3 w-3 text-[#333]" />
    </div>
  );
}

const TICKS: [number, string][] = [[0, "0"], [1, "0,004"], [2, "0,008"], [3, "0,012"], [4, "0,016"], [5, "0,02"], [6, "0,024"], [7, "0,028"]];

function Chart() {
  return (
    <svg className="block h-[908px] w-[2448px] overflow-visible font-['Noto_Sans',sans-serif]" viewBox="602 1144 2448 908" fill="#444">
      <rect x="602" y="1144" width="2448" height="908" fill="#fff" />
      <text x="1525" y="1187" fontSize="42" textLength="602">Mean of SlopePorc by PerfilNom</text>
      {TICKS.map(([n, s]) => {
        const y = 1952 - n * 102.8;
        return (
          <g key={s}>
            <rect x="749" y={y - 1} width="2199" height="2" fill={n ? "#e8e8e8" : "#999"} />
            <text x="724" y={y + 11} fontSize="27.500" textAnchor="end" textLength={s.length === 1 ? 15 : s.length === 4 ? 53 : 68}>{s}</text>
          </g>
        );
      })}
      <rect x="913" y="1820" width="772" height="133" fill="#2e73fd" />
      <rect x="2013" y="1228" width="771" height="725" fill="#db000e" />
      <path d="M1299 1953V1960M2398.500 1953V1960" stroke="#999" strokeWidth="1.500" />
      <g textAnchor="middle">
        <text x="1298.500" y="1812" fontSize="24" textLength="86">0,00511</text>
        <text x="2398.500" y="1220" fontSize="24" textLength="88">0,02814</text>
        <text x="1299" y="1997" fontSize="27.500" textLength="159">Perfil Río Frío</text>
        <text x="2398.500" y="1997" fontSize="27.500" textLength="207">Perfil Vía a Pacho</text>
        <text x="1851.500" y="2044.500" fontSize="31" textLength="137">PerfilNom</text>
        <text transform="translate(634 1590) rotate(-90)" fontSize="31" textLength="264">Mean of SlopePorc</text>
      </g>
    </svg>
  );
}

function Center() {
  return (
    <div className="ml-[11px] w-[2452px] shrink-0">
      <div className="flex h-11 items-center">
        <div className="flex h-11 w-[226px] shrink-0 items-center rounded-t-[6px] bg-[#007acd] text-[22.500px] text-white">
          <MapIcon c="mt-[4px] ml-[12px] h-8 w-8" />
          <T c="mt-[7px] ml-[11px] w-[118px]">DEMProfile</T>
          <Cross c="mt-[4px] ml-[20px] h-[19px] w-[19px]" />
        </div>
        <Chevron c="mt-[4px] mr-[10px] ml-auto h-4 w-4 text-[#6b6b6b]" />
      </div>
      <div className="h-[4px] bg-[#007acd]" />
      <div className="border-x-2 border-t-2 border-[#d0d3d8]">
        <MapCanvas />
        <StatusBar />
      </div>
      <div className="mt-[12px] flex h-[45px] items-center">
        <div className="flex h-[45px] w-[496px] shrink-0 items-center rounded-t-[8px] bg-[#d3d4d8] text-[22.500px] text-[#4a4a4a]">
          <BarIcon c="mt-[3px] ml-[12px] h-8 w-8" />
          <T c="mt-[8px] ml-[11px] w-[388px]">LineaPerfilPoint - M...rc by PerfilNom</T>
          <Cross c="mt-[4px] ml-[19px] h-5 w-5 text-[#6b6b6b]" />
        </div>
        <Chevron c="mt-[4px] mr-[10px] ml-auto h-4 w-4 text-[#6b6b6b]" />
      </div>
      <div className="h-[6px] bg-[#d3d4d8]" />
      <ChartToolbar />
      <div className="border-x-2 border-b-2 border-[#d3d4d8]"><Chart /></div>
    </div>
  );
}

/* ---------- Chart properties pane ---------- */

const Label = ({ c, w, children }: { c: string; w: string; children: string }) => (
  <div className={"ml-[39px] flex h-8 items-center " + c}><T c={"mt-[1px] " + w}>{children}</T></div>
);

function ChartProperties() {
  return (
    <div className="ml-[13px] w-[777px] shrink-0">
      <div className="h-[1887px] rounded-t-[8px] border-2 border-[#d3d4d8] bg-[#f7f9f8] text-[23.500px] text-[#4a4a4a]">
        <div className="flex h-[60px] items-center pt-[4px]">
          <T c="mt-[1px] ml-[12px] w-[477px] text-[29px] text-[#1a1a1a]">Chart Properties - LineaPerfilPoint</T>
          <Chevron c="ml-[180px] h-[15px] w-[15px]" />
          <Pin c="ml-[22px] h-5 w-[14px]" />
          <Cross c="ml-[19px] h-5 w-5" />
        </div>
        <div className="flex h-[46px] items-center">
          <BarIcon c="ml-[17px] h-[46px] w-[46px]" />
          <T c="mt-[4px] ml-[13px] w-[429px] text-[29px]">Mean of SlopePorc by PerfilNom</T>
        </div>
        <div className="mt-[25px] flex h-8 items-center text-[24px] text-[#5a5a5a]">
          <T c="mt-[6px] ml-[14px] w-[55px] font-medium text-[#3f3f3f]">Data</T>
          <T c="mt-[6px] ml-[20px] w-[67px]">Series</T>
          <T c="mt-[6px] ml-[21px] w-[54px]">Axes</T>
          <T c="mt-[6px] ml-[20px] w-[79px]">Guides</T>
          <T c="mt-[6px] ml-[20px] w-[81px]">Format</T>
          <T c="mt-[6px] ml-[20px] w-[88px]">General</T>
          <svg className="ml-[190px] h-8 w-8 shrink-0" viewBox="0 0 32 32" fill="none" stroke="#4fa3dc" strokeWidth="2">
            <circle cx="16" cy="16" r="15" fill="#e8f4fc" /><path d="M11 12C11 8 13 7 16 7S21 8 21 11.500C21 15 16.200 15 16.200 20M16.200 23V26" strokeWidth="3.200" />
          </svg>
        </div>
        <div className="mt-[7px] ml-[13px] h-[4px] w-[56px] bg-[#007ac2]" />
        <div className="mt-[61px] flex h-8 items-center">
          <T c="mt-[3px] ml-[40px] w-[112px] text-[26px] font-semibold">Variables</T>
          <svg className="ml-[9px] h-8 w-8 shrink-0" viewBox="0 0 32 32" fill="#e3e3e3" stroke="#6b6b6b" strokeWidth="2">
            <path d="M14.500 1h3l.8 4.500 3 1.200 4-2.700 2.500 2.500-2.700 4 1.200 3 4.500.8v3.400l-4.500.8-1.200 3 2.700 4-2.500 2.500-4-2.700-3 1.200-.8 4.500h-3l-.8-4.500-3-1.200-4 2.700-2.500-2.500 2.700-4-1.200-3-4.500-.8v-3.400l4.500-.8 1.200-3-2.700-4 2.500-2.500 4 2.700 3-1.200Z" />
            <circle cx="16" cy="16" r="5" fill="#f7f9f8" />
          </svg>
        </div>
        <Label c="mt-[29px]" w="w-[182px]">Category or Date</Label>
        <div className="mt-[10px] ml-[39px] flex h-12 items-center">
          <div className="flex h-12 w-[674px] shrink-0 items-center border-2 border-[#999] bg-white text-black">
            <T c="mt-[3px] ml-[6px] w-[284px]">{"<Match Layer Symbology>"}</T>
            <Triangle c="ml-[362px] h-[6px] w-[10px] text-[#4a4a4a]" />
          </div>
          <XField c="ml-[8px]" />
        </div>
        <Label c="mt-[26px]" w="w-[131px]">Aggregation</Label>
        <div className="mt-[10px] ml-[39px] flex h-12 w-[710px] items-center border-2 border-[#999] bg-white text-black">
          <T c="mt-[3px] ml-[5px] w-[59px]">Mean</T>
          <Chevron c="mt-[2px] ml-[623px] h-3 w-3 text-[#3a3a3a]" />
        </div>
        <Label c="mt-[14px]" w="w-[168px]">Numeric field(s)</Label>
        <div className="mt-[12px] ml-[79px] flex h-11 items-center">
          <div className="flex h-11 w-[152px] shrink-0 items-center border-2 border-[#4a4a4a] bg-white">
            <svg className="ml-[24px] h-6 w-6 shrink-0" viewBox="0 0 24 24" stroke="#5ca862" strokeWidth="4"><path d="M12 0V24M0 12H24" /></svg>
            <T c="mt-[3px] ml-[10px] w-[64px]">Select</T>
          </div>
          <XField c="ml-[8px]" />
        </div>
        <div className="mt-[14px] ml-[79px] flex h-12 items-center">
          <div className="flex h-12 w-[628px] shrink-0 items-center border-2 border-[#c8c8ca] bg-white text-[22px]">
            <T c="mt-[3px] ml-[6px] w-[97px]">SlopePorc</T>
          </div>
          <svg className="ml-[10px] h-5 w-5 shrink-0" viewBox="0 0 20 20" stroke="#cd6545" strokeWidth="4.600"><path d="M2 2 18 18M18 2 2 18" /></svg>
        </div>
        <div className="mt-[14px] ml-[39px] flex h-8 items-center text-[#c6c6ca]">
          <T c="mt-[3px] w-[188px]">Split by (optional)</T>
          <svg className="ml-[13px] h-7 w-7 shrink-0" viewBox="0 0 28 28" fill="none" stroke="#007ac2" strokeWidth="2"><circle cx="14" cy="14" r="13" /><path d="M14 6V9M11 12H14.500V21M10.500 21.500H18" strokeWidth="2.800" /></svg>
        </div>
        <div className="mt-[24px] ml-[39px] flex h-12 items-center">
          <div className="flex h-12 w-[674px] shrink-0 items-center border-2 border-[#bfbfc3] bg-[#efeff1]">
            <Triangle c="ml-[652px] h-[6px] w-[10px] text-[#4a4a4a]" />
          </div>
          <XField c="ml-[8px] opacity-40" />
        </div>
        <Label c="mt-[28px] text-[26px] font-semibold" w="w-[146px]">Data Labels</Label>
        <div className="mt-[16px] ml-[39px] flex h-7 items-center">
          <Check on c="rounded-none" />
          <T c="mt-[3px] ml-[8px] w-[107px] text-black">Label bars</T>
        </div>
      </div>
      <div className="-mt-[2px] flex h-[42px] items-stretch text-[23px] text-[#4a4a4a]">
        <T c="mt-[10px] ml-[11px] w-[80px]">Catalog</T>
        <div className="ml-[15px] w-[115px] shrink-0 rounded-b-[7px] border-x-2 border-b-2 border-[#d3d4d8] bg-[#f7f9f8]">
          <T c="mt-[10px] ml-[10px] w-[73px] text-[#007acd]">Chart...</T>
        </div>
        <T c="mt-[10px] ml-[12px] w-[82px]">Geopr...</T>
        <T c="mt-[10px] ml-[30px] w-[86px]">Create...</T>
        <T c="mt-[10px] ml-[27px] w-[80px]">Modif...</T>
        <T c="mt-[10px] ml-[31px] w-[76px]">Symb...</T>
        <T c="mt-[10px] ml-[34px] w-[73px]">Label...</T>
      </div>
    </div>
  );
}

export default function App() {
  return (
    <div className="flex h-[2078px] w-[3866px] overflow-hidden bg-[#ebebeb] font-['Open_Sans','Noto_Sans',sans-serif]">
      <div className="flex w-[13px] shrink-0 flex-col bg-white">
        <div className="mt-[538px] h-[40px] bg-[#f4f3f2]" />
        <div className="h-[46px] border-b border-[#dcdcdc] bg-white" />
        <div className="flex h-[996px] flex-col bg-[#f0f0f0]">
          <svg className="mt-[7px] h-[4px] w-[8px]" viewBox="0 0 8 4"><path d="M0 4H8L4 0Z" fill="#555" /></svg>
          <div className="mt-[764px] h-[58px] w-[11px] bg-[#c1c1c1]" />
          <svg className="mt-[102px] h-[4px] w-[8px]" viewBox="0 0 8 4"><path d="M0 0H8L4 4Z" fill="#555" /></svg>
        </div>
      </div>
      <div className="flex w-[3840px] shrink-0 flex-col">
        <div className="bg-[#f7f9f8]">
          <TitleBar />
          <Ribbon />
        </div>
        <div className="flex h-[1950px] items-start pt-[12px]">
          <Contents />
          <Center />
          <ChartProperties />
        </div>
        <div className="h-[13px] border-t-2 border-[#bbbdbd] bg-[#eeeeee]" />
      </div>
      <div className="w-[13px] shrink-0 bg-white">
        <div className="mt-[525px] h-[40px] border-t border-l border-[#777] bg-[#e6e6e6]" />
        <div className="h-[48px] border-b border-l border-b-[#ccc] border-l-[#777] bg-[#f5f5f5]" />
        <div className="h-[945px] border-b border-l border-[#777] bg-white" />
      </div>
    </div>
  );
}
